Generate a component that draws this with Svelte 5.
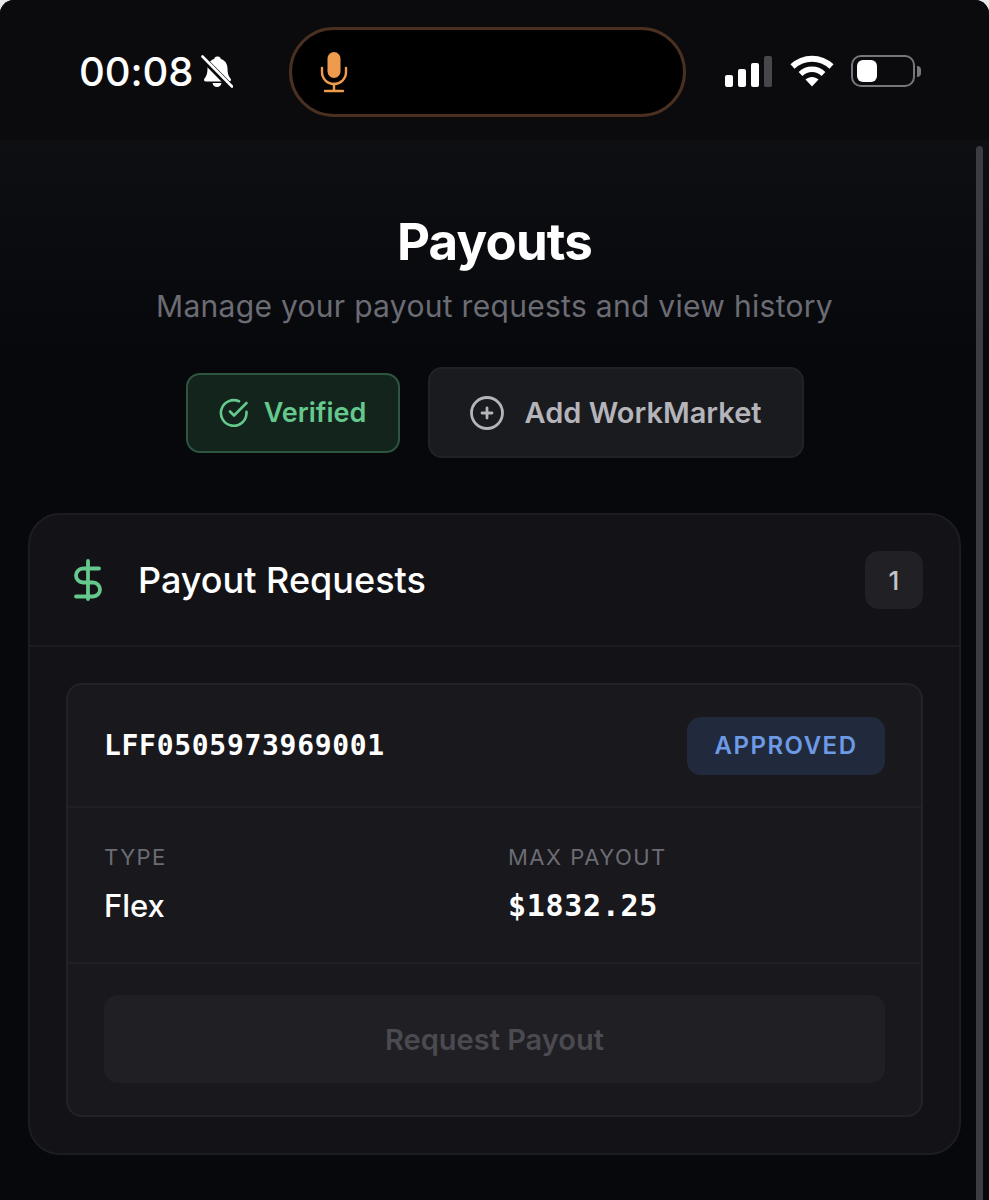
<script>
	const fields = [
		{ label: 'TYPE', value: 'Flex', mono: false },
		{ label: 'MAX PAYOUT', value: '$1832.25', mono: true }
	];
</script>

<div class="screen">
	<header class="status-bar">
		<div class="time-group">
			<span class="time">00:08</span>
			<svg class="bell" viewBox="0 0 32 34" width="32" height="34">
				<path d="M16 1.500c-1.600 0-2.600 1-2.800 2.400C8.700 5.200 6.500 9 6.500 13.500c0 4.500-.8 7.500-3 10-1 1.200-.5 3 1.500 3h23c2 0 2.500-1.800 1.500-3-2.200-2.500-3-5.500-3-10 0-4.500-2.200-8.300-6.700-9.600-.2-1.400-1.200-2.400-2.800-2.400z" fill="#fff" />
				<path d="M11.500 28h9c-.4 2.400-2.300 4-4.500 4s-4.100-1.600-4.500-4z" fill="#fff" />
				<path d="M1.500 3 30 32" stroke="#0b0b0e" stroke-width="6" />
				<path d="M1.500 1.500 31 31.500" stroke="#fff" stroke-width="2.600" stroke-linecap="round" />
			</svg>
		</div>

		<div class="island">
			<svg class="mic" viewBox="0 0 28 42" width="28" height="42">
				<rect x="7.500" y="1" width="13" height="26" rx="6.500" fill="#ee9b4d" />
				<path d="M2 17v4c0 7 5.400 12 12 12s12-5 12-12v-4" fill="none" stroke="#ee9b4d" stroke-width="2.400" stroke-linecap="round" />
				<path d="M14 33v7M5 40h18" fill="none" stroke="#ee9b4d" stroke-width="2.400" stroke-linecap="round" />
			</svg>
		</div>

		<div class="indicators">
			<div class="signal">
				<span class="bar b1"></span>
				<span class="bar b2"></span>
				<span class="bar b3"></span>
				<span class="bar b4"></span>
			</div>
			<svg class="wifi" viewBox="0 0 44 32" width="44" height="32">
				<path d="M2.500 11.500C13.500 1 30.500 1 41.500 11.500" fill="none" stroke="#fff" stroke-width="6" />
				<path d="M10.500 19c6.700-6.300 16.300-6.300 23 0" fill="none" stroke="#fff" stroke-width="5.500" />
				<path d="M15.500 24.500c3.700-3.500 9.300-3.500 13 0L22 31.500z" fill="#fff" />
			</svg>
			<div class="battery">
				<div class="battery-body"><span class="battery-level"></span></div>
				<span class="battery-cap"></span>
			</div>
		</div>
	</header>

	<main class="content">
		<span class="scrollbar"></span>

		<h1>Payouts</h1>
		<p class="subtitle">Manage your payout requests and view history</p>

		<div class="actions">
			<div class="verified">
				<svg viewBox="0 0 30 30" width="30" height="30" fill="none" stroke="#65c88c" stroke-width="2.600" stroke-linecap="round" stroke-linejoin="round">
					<path d="M27.500 13.800V15A12.800 12.800 0 1 1 20 3.300" />
					<path d="M27.500 5 15 17.500l-4-4" />
				</svg>
				<span>Verified</span>
			</div>
			<button type="button" class="add">
				<svg viewBox="0 0 36 36" width="36" height="36" fill="none" stroke="#b4b4ba" stroke-linecap="round">
					<circle cx="18" cy="18" r="15.500" stroke-width="2.800" />
					<path d="M18 13v10M13 18h10" stroke-width="2.800" />
				</svg>
				<span>Add WorkMarket</span>
			</button>
		</div>

		<section class="card">
			<div class="card-header">
				<svg class="dollar" viewBox="0 0 32 42" width="32" height="42" fill="none" stroke="#65c88c" stroke-width="3.800" stroke-linecap="round" stroke-linejoin="round">
					<path d="M16 2v38" />
					<path d="M27 9.500H11a7 7 0 0 0 0 14h10a7 7 0 0 1 0 14H4" />
				</svg>
				<h2>Payout Requests</h2>
				<span class="count">1</span>
			</div>

			<div class="card-body">
				<article class="request">
					<div class="request-top">
						<span class="request-id">LFF0505973969001</span>
						<span class="status">APPROVED</span>
					</div>
					<div class="request-details">
						{#each fields as field}
							<div class="field">
								<span class="field-label">{field.label}</span>
								<span class="field-value" class:mono={field.mono}>{field.value}</span>
							</div>
						{/each}
					</div>
					<div class="request-footer">
						<button type="button" class="request-btn" disabled>Request Payout</button>
					</div>
				</article>
			</div>
		</section>
	</main>
</div>

<style>
	:global(body) {
		margin: 0;
		background: #e8e8e8;
	}

	.screen {
		width: 989px;
		height: 1200px;
		display: flex;
		flex-direction: column;
		overflow: hidden;
		border-radius: 14px 14px 0 0;
		background: #06070b;
		font-family: Inter, 'Liberation Sans', sans-serif;
		color: #fff;
	}

	.status-bar {
		height: 140px;
		flex-shrink: 0;
		display: flex;
		align-items: center;
		background: #0b0b0e;
		padding: 5px 68px 0 79px;
		box-sizing: border-box;
	}

	.time-group {
		display: flex;
		align-items: center;
		gap: 8px;
		width: 210px;
		margin-top: -1px;
	}

	.time {
		font-size: 40px;
		font-weight: 500;
		line-height: 1;
		letter-spacing: -0.1px;
	}

	.island {
		width: 397px;
		height: 90px;
		box-sizing: border-box;
		border: 3px solid #4a3020;
		border-radius: 45px;
		background: #000;
		display: flex;
		align-items: center;
		padding-left: 28px;
		margin-top: -2px;
	}

	.indicators {
		margin-left: auto;
		display: flex;
		align-items: center;
		margin-top: -3px;
	}

	.signal {
		display: flex;
		align-items: flex-end;
		gap: 5px;
		height: 32px;
		margin-right: 18px;
	}

	.bar {
		width: 8px;
		border-radius: 2px;
		background: #fff;
	}

	.b1 { height: 12px; }
	.b2 { height: 18px; }
	.b3 { height: 24px; }
	.b4 { height: 31px; background: #47474b; }

	.wifi {
		margin-right: 17px;
	}

	.battery {
		display: flex;
		align-items: center;
		gap: 2px;
	}

	.battery-body {
		width: 64px;
		height: 32px;
		box-sizing: border-box;
		border: 2.500px solid #77777b;
		border-radius: 10px;
		padding: 3px 4px;
	}

	.battery-level {
		display: block;
		width: 20px;
		height: 100%;
		border-radius: 6px;
		background: #fff;
	}

	.battery-cap {
		width: 4px;
		height: 11px;
		border-radius: 0 4px 4px 0;
		background: #77777b;
	}

	.content {
		position: relative;
		flex: 1;
		display: flex;
		flex-direction: column;
		align-items: center;
		padding: 0 28px;
		box-sizing: border-box;
		background: linear-gradient(#0e0f13, #07080c 220px);
	}

	.scrollbar {
		position: absolute;
		top: 6px;
		bottom: 0;
		right: 6px;
		width: 7px;
		border-radius: 4px 4px 0 0;
		background: #3c3c41;
	}

	h1 {
		margin: 70px 0 0;
		font-size: 51px;
		font-weight: 700;
		line-height: 64px;
		letter-spacing: -0.8px;
	}

	.subtitle {
		margin: 14px 0 0;
		font-size: 30px;
		line-height: 36px;
		letter-spacing: 0.3px;
		color: #6c6c74;
	}

	.actions {
		margin-top: 43px;
		display: flex;
		align-items: center;
		gap: 28px;
	}

	.verified {
		width: 214px;
		height: 80px;
		box-sizing: border-box;
		display: flex;
		align-items: center;
		justify-content: center;
		gap: 15px;
		border: 2px solid #2e5540;
		border-radius: 14px;
		background: #13241d;
		color: #65c88c;
		font-size: 27px;
		font-weight: 600;
	}

	.add {
		width: 376px;
		height: 91px;
		box-sizing: border-box;
		display: flex;
		align-items: center;
		justify-content: center;
		gap: 19px;
		border: 2px solid #212227;
		border-radius: 14px;
		background: #1a1b1f;
		color: #b4b4ba;
		font-family: inherit;
		font-size: 29px;
		font-weight: 600;
	}

	.card {
		width: 100%;
		height: 642px;
		margin-top: 55px;
		box-sizing: border-box;
		border: 2px solid #1c1d22;
		border-radius: 32px;
		background: #131317;
		display: flex;
		flex-direction: column;
		flex-shrink: 0;
	}

	.card-header {
		height: 132px;
		flex-shrink: 0;
		box-sizing: border-box;
		display: flex;
		align-items: center;
		padding: 0 36px 0 42px;
		border-bottom: 2px solid #1c1d22;
	}

	h2 {
		margin: 0 0 0 34px;
		font-size: 36px;
		font-weight: 500;
	}

	.count {
		margin-left: auto;
		width: 58px;
		height: 58px;
		border-radius: 14px;
		background: #212125;
		color: #c4c4c8;
		font-size: 26px;
		font-weight: 500;
		display: flex;
		align-items: center;
		justify-content: center;
	}

	.card-body {
		padding: 36px;
	}

	.request {
		height: 434px;
		box-sizing: border-box;
		border: 2px solid #222328;
		border-radius: 16px;
		background: #18181d;
		display: flex;
		flex-direction: column;
	}

	.request-top {
		height: 123px;
		flex-shrink: 0;
		box-sizing: border-box;
		display: flex;
		align-items: center;
		justify-content: space-between;
		padding: 0 36px;
		border-bottom: 2px solid #1f2025;
	}

	.request-id {
		font-family: 'DejaVu Sans Mono', 'Liberation Mono', monospace;
		font-size: 28px;
		font-weight: 700;
		letter-spacing: 0.7px;
	}

	.status {
		width: 198px;
		height: 58px;
		border-radius: 14px;
		background: #212a3c;
		color: #6d9ae6;
		font-size: 24px;
		font-weight: 600;
		letter-spacing: 1.500px;
		display: flex;
		align-items: center;
		justify-content: center;
	}

	.request-details {
		height: 156px;
		flex-shrink: 0;
		box-sizing: border-box;
		display: grid;
		grid-template-columns: 404px 1fr;
		padding: 35px 36px 0;
		border-bottom: 2px solid #1f2025;
	}

	.field {
		display: flex;
		flex-direction: column;
		gap: 15px;
	}

	.field-label {
		font-size: 22px;
		line-height: 28px;
		letter-spacing: 1.500px;
		color: #6c6c74;
	}

	.field-value {
		font-size: 31px;
		line-height: 40px;
		font-weight: 500;
	}

	.field-value.mono {
		font-family: 'DejaVu Sans Mono', 'Liberation Mono', monospace;
		font-size: 30px;
		font-weight: 700;
		letter-spacing: 0.7px;
	}

	.request-footer {
		padding: 31px 36px 0;
	}

	.request-btn {
		width: 100%;
		height: 88px;
		border: none;
		border-radius: 14px;
		background: #1f1f24;
		color: #4a4a50;
		font-family: inherit;
		font-size: 29px;
		font-weight: 600;
	}
</style>
